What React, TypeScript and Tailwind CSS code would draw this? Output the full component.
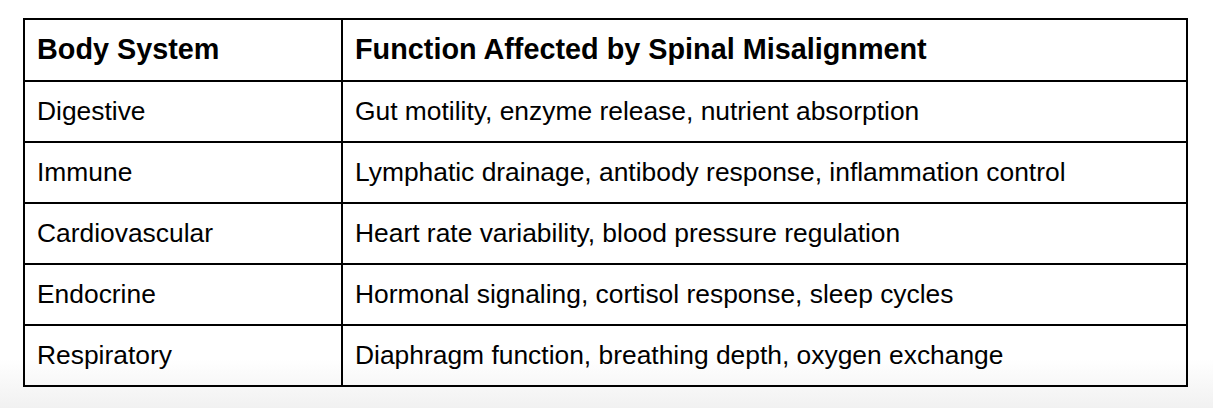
import React from "react";

const rows: [string, string][] = [
  ["Digestive", "Gut motility, enzyme release, nutrient absorption"],
  ["Immune", "Lymphatic drainage, antibody response, inflammation control"],
  ["Cardiovascular", "Heart rate variability, blood pressure regulation"],
  ["Endocrine", "Hormonal signaling, cortisol response, sleep cycles"],
  ["Respiratory", "Diaphragm function, breathing depth, oxygen exchange"],
];

export default function App() {
  return (
    <div className="h-[408px] w-[1213px] bg-linear-to-b from-white from-[88%] to-[#f1f1f1] pt-[18px] pl-[23px] font-['Liberation_Sans',Arial,sans-serif] text-[26.4px] text-black">
      <table className="w-[1165px] border-collapse">
        <thead>
          <tr className="h-[62px]">
            <th className="w-[318px] border-2 border-black px-3 text-left text-[28.8px] font-bold">Body System</th>
            <th className="border-2 border-black px-3 text-left text-[28.8px] font-bold">Function Affected by Spinal Misalignment</th>
          </tr>
        </thead>
        <tbody>
          {rows.map(([system, fn]) => (
            <tr key={system} className="h-[61px]">
              <td className="border-2 border-black px-3">{system}</td>
              <td className="border-2 border-black px-3">{fn}</td>
            </tr>
          ))}
        </tbody>
      </table>
    </div>
  );
}
